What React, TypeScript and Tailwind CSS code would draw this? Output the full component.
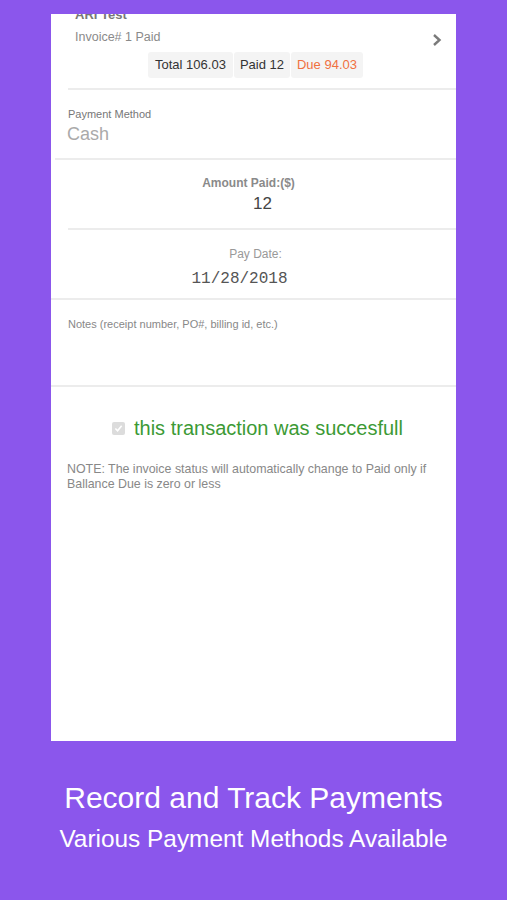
import React from "react";

export default function App() {
  const f = { fontFamily: '"Liberation Sans", Arial, sans-serif' };
  return (
    <div className="w-[507px] h-[900px] bg-[#8b56ec] flex flex-col items-center" style={f}>
      <div className="mt-[14px] w-[405px] h-[727px] bg-white overflow-hidden flex flex-col">
        {/* Header */}
        <div className="relative pl-[24px] pr-[14px]">
          <div className="mt-[-7px] text-[13px] leading-[16px] font-bold text-[#777]">ARI Test</div>
          <div className="mt-[6px] text-[12.5px] leading-[16px] text-[#8a8a8a]">Invoice# 1 Paid</div>
          <div className="absolute right-[14px] top-[19px] text-[#777]">
            <svg width="10" height="14" viewBox="0 0 10 14">
              <path d="M2 2 L7.5 7 L2 12" fill="none" stroke="#7a7a7a" strokeWidth="2.4" />
            </svg>
          </div>
          <div className="flex justify-center mt-[7px] ml-[-24px] pl-[18px]">
            <div className="flex h-[26px] items-center text-[13px]">
              <span className="h-full flex items-center px-[7px] bg-[#f4f4f4] rounded-[3px] text-[#333]">Total 106.03</span>
              <span className="h-full flex items-center px-[6px] ml-[1px] bg-[#f4f4f4] rounded-[3px] text-[#333]">Paid 12</span>
              <span className="h-full flex items-center px-[6px] ml-[1px] bg-[#f4f4f4] rounded-[3px] text-[#f0703f]">Due 94.03</span>
            </div>
          </div>
        </div>
        <div className="mt-[10px] ml-[17px] h-[2px] bg-[#ececec]"></div>

        {/* Payment Method */}
        <div className="pl-[17px] h-[68px]">
          <div className="mt-[17px] text-[11px] leading-[14px] text-[#777]">Payment Method</div>
          <div className="mt-[2px] ml-[-1px] text-[18px] leading-[22px] text-[#aaa]">Cash</div>
        </div>
        <div className="ml-[4px] h-[2px] bg-[#ececec]"></div>

        {/* Amount Paid */}
        <div className="h-[68px] flex flex-col items-center">
          <div className="mt-[16px] ml-[-10px] text-[12px] leading-[14px] font-bold text-[#8a8a8a]">Amount Paid:($)</div>
          <div className="mt-[4px] ml-[18px] text-[17px] leading-[20px] text-[#444]">12</div>
        </div>
        <div className="ml-[17px] h-[2px] bg-[#ececec]"></div>

        {/* Pay Date */}
        <div className="h-[68px] flex flex-col items-center">
          <div className="mt-[17px] ml-[4px] text-[12px] leading-[14px] text-[#999]">Pay Date:</div>
          <div className="mt-[9px] ml-[-28px] text-[16px] leading-[18px] text-[#555]" style={{ fontFamily: '"Liberation Mono", "DejaVu Sans Mono", monospace' }}>11/28/2018</div>
        </div>
        <div className="h-[2px] bg-[#ececec]"></div>

        {/* Notes */}
        <div className="h-[85px] pl-[17px]">
          <div className="mt-[17px] text-[11px] leading-[14px] text-[#888]">Notes (receipt number, PO#, billing id, etc.)</div>
        </div>
        <div className="h-[2px] bg-[#ececec]"></div>

        {/* Success */}
        <div className="mt-[29px] flex items-center justify-center ml-[8px]">
          <div className="w-[13px] h-[13px] rounded-[2px] bg-[#dcdcdc] flex items-center justify-center">
            <svg width="9" height="9" viewBox="0 0 10 10">
              <path d="M1.5 5 L4 7.5 L8.5 2" fill="none" stroke="#ffffff" strokeWidth="1.8" />
            </svg>
          </div>
          <div className="ml-[9px] text-[20px] leading-[24px] text-[#3c9a35]">this transaction was succesfull</div>
        </div>
        <div className="mt-[22px] pl-[16px] pr-[20px] text-[12.4px] leading-[15px] text-[#888]">
          NOTE: The invoice status will automatically change to Paid only if Ballance Due is zero or less
        </div>
      </div>

      {/* Footer */}
      <div className="mt-[40px] text-[30px] leading-[34px] text-white">Record and Track Payments</div>
      <div className="mt-[10px] text-[24.4px] leading-[28px] text-white">Various Payment Methods Available</div>
    </div>
  );
}
